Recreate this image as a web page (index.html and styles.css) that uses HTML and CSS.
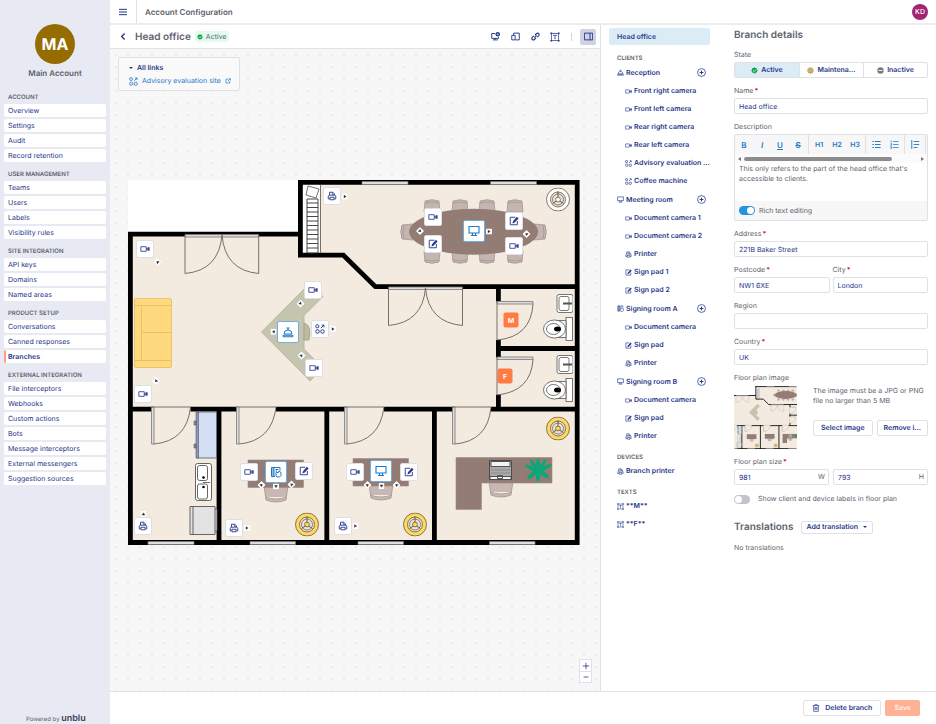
FILE: index.html
```html
<!DOCTYPE html>
<html lang="en">
<head>
<meta charset="utf-8">
<title>Account Configuration</title>
<link rel="stylesheet" href="styles.css">
</head>
<body>
<svg class="sprite" aria-hidden="true">
  <symbol id="i-cam" viewBox="0 0 24 24"><path d="M2 6.500h13v11H2zM16 11l6-3v8l-6-3z" fill="none" stroke="currentColor" stroke-width="2"/><path d="M18 10h4v4h-4z" fill="currentColor"/></symbol>
  <symbol id="i-print" viewBox="0 0 24 24"><path d="M6 10V3h8l4 4v3M6 19H3v-5c0-3 1-4 4-4h10c3 0 4 1 4 4v5h-3M7 15h10v6H7z" fill="none" stroke="currentColor" stroke-width="2.2"/><path d="M13 3v5h5" fill="none" stroke="currentColor" stroke-width="1.6"/></symbol>
  <symbol id="i-pad" viewBox="0 0 24 24"><path d="M15 3H3v18h17V12" fill="none" stroke="currentColor" stroke-width="2.2"/><path d="M19 2l4 4-10 10-5 2 2-6z" fill="currentColor"/></symbol>
  <symbol id="i-mon" viewBox="0 0 24 24"><path d="M2 3h20v13H2zM9 16v4M15 16v4M6 21h12" fill="none" stroke="currentColor" stroke-width="2.2"/></symbol>
  <symbol id="i-bell" viewBox="0 0 24 24"><path d="M4 16a8 8 0 0 1 16 0zM2 18.500h20v3H2zM12 8V4M9 4h6" fill="none" stroke="currentColor" stroke-width="2"/></symbol>
  <symbol id="i-sign" viewBox="0 0 24 24"><path d="M10 21H3V3h17v6M8 3v18M11 7h6M11 10h3" fill="none" stroke="currentColor" stroke-width="2"/><path d="M3 3h5v18H3z" fill="currentColor" opacity=".5"/><path d="M12 20v-7l2-1 2 2 2-4 4 3v6l-3 3h-5z" fill="none" stroke="currentColor" stroke-width="2"/></symbol>
  <symbol id="i-app" viewBox="0 0 24 24"><g fill="none" stroke="currentColor" stroke-width="2.200"><rect x="2" y="2" width="7" height="7" rx="2"/><rect x="2" y="14" width="8" height="8" rx="3"/><rect x="14" y="14" width="8" height="8" rx="3"/><path d="M14 10l7-7M16 2.500h5.500V8"/></g></symbol>
  <symbol id="i-text" viewBox="0 0 24 24"><path d="M3.500 3.500h17v17h-17zM8 9.500V8h8v1.500M12 8v8M10.500 16h3" fill="none" stroke="currentColor" stroke-width="1.800"/><path d="M1 1h4v4H1zM19 1h4v4h-4zM1 19h4v4H1zM19 19h4v4h-4z" fill="currentColor"/></symbol>
  <symbol id="i-plus" viewBox="0 0 24 24"><circle cx="12" cy="12" r="10.500" fill="none" stroke="currentColor" stroke-width="2"/><path d="M12 7v10M7 12h10" stroke="currentColor" stroke-width="2.600"/></symbol>
  <symbol id="i-check" viewBox="0 0 24 24"><path d="M12 1l3 2 4 0 1 4 3 4-2 4-1 4-4 1-4 3-4-3-4-1-1-4-2-4 3-4 1-4 4 0z" fill="#15a34a"/><path d="M7 12l4 4 7-8" fill="none" stroke="#fff" stroke-width="2.600"/></symbol>
  <symbol id="i-ext" viewBox="0 0 24 24"><path d="M12 5H4v15h15v-8M12 12l9-9M14 3h7v7" fill="none" stroke="currentColor" stroke-width="2.600"/></symbol>
  <symbol id="fan" viewBox="-12 -12 24 24"><circle r="11.500" fill="var(--fan, #fff)" stroke="#62594e" stroke-width=".8"/><circle r="7.500" fill="#eee2d2" stroke="#62594e" stroke-width=".8"/><circle r="5.500" fill="none" stroke="#62594e" stroke-width=".7"/><path d="M0-8v6M-5.500 4l4-2.500M5.500 4l-4-2.500" stroke="#62594e" stroke-width="1"/><circle r="2.400" fill="var(--fan, #fff)" stroke="#62594e" stroke-width=".8"/></symbol>
  <symbol id="seat" viewBox="0 0 18 14"><path d="M2 2Q9-.5 16 2L17 13H1zM2 4Q9 2 16 4" fill="#c5b5b0" stroke="#a59590" stroke-width=".8"/></symbol>
  <symbol id="desk-seat" viewBox="0 0 26 18"><path d="M1 1h24l-2 14q-10 4-20 0zM2 12q11 4 22 0" fill="#c7b8b4" stroke="#a39490" stroke-width=".8"/></symbol>
  <symbol id="wc" viewBox="0 0 30 50"><g fill="#fff" stroke="#555" stroke-width=".8"><rect x="14" y="1" width="16" height="18" rx="2"/><rect x="16" y="3" width="10" height="14" rx="2"/><path d="M20 10h9" stroke-width="2"/><rect x="23" y="24" width="6.500" height="23"/><path d="M14 27h9v17h-9z"/><ellipse cx="11.500" cy="35.500" rx="11" ry="9"/><ellipse cx="10.500" cy="35.500" rx="7" ry="5.500"/></g><ellipse cx="14.500" cy="35.500" rx="3.500" ry="2.500"/></symbol>
  <symbol id="arrow" viewBox="-3 -3 6 6"><rect x="-3" y="-3" width="6" height="6" rx="1" fill="#fff"/><path d="M-1.200-1.800L1.500 0l-2.700 1.800z" fill="#2f3447"/></symbol>

  <symbol id="plan-art" viewBox="127 179 453 366">
    <path d="M128 180h452v365H128z" fill="#fff"/>
    <path d="M130 234h170v-52h277v361H130z" fill="#f3eae0"/>
    <path d="M302 184h18v69h-18z" fill="#fff"/>
    <g fill="none" stroke="#000" stroke-width="4.800">
      <path d="M130.400 545V234.200h170M300.400 180v75.200h43l32 31.500h202M298 182.400h281M577.200 180v365M128 542.500h451"/>
      <path d="M128 409.200h23.400M190.500 409.200H239M276 409.200h68.500M384 409.200h68.500M491 409.200h86M219 407v137M326.800 407v137M434.400 407v137M498.400 287v14.500M498.400 340v17M498.400 394.700V409M496 348.500h80"/>
    </g>
    <g fill="#ddd" stroke="#777" stroke-width=".8">
      <path d="M362 181.500h46v3h-46zM490.500 181.500h46v3h-46zM148 541.500h46v3h-46zM250 541.500h45.500v3H250zM358 541.500h45.500v3H358zM489.500 541.500H535v3h-45.500zM185 234.500h73.500v2.500H185zM388.500 287h74v2.500h-74z"/>
      <path d="M151.500 407h2.500v37h-2.500zM236.500 407h2.500v37h-2.500zM344.500 407h2.500v37h-2.500zM452.500 407h2.500v37h-2.500zM497 301.500h36v2.500h-36zM497 357h36v2.500h-36z"/>
    </g>
    <g fill="none" stroke="#6b6259" stroke-width=".9">
      <path d="M185 235v38.500q34-3 37-38.500q3 35.500 36.700 38.500V235M388.500 288v37.500q34-3 37-37.500q3 34.500 37 37.500V288"/>
      <path d="M154 444q33-3 36.500-37M239 444q33-3 37-37M347 444q33-3 37-37M455 444q33-3 36-37M533 304q-2 33-36 36v-38M533 359.500q-2 32-36 35.500v-38M151 407h40M239 407h37M344 407h40M452 407h39"/>
      <path d="M320.500 185v68M308 186l11 3-3 9-10-3z"/>
      <path d="M307 199h11v54h-11zM307 203h11M307 207.500h11M307 212h11M307 216.500h11M307 221h11M307 225.500h11M307 230h11M307 234.500h11M307 239h11M307 243.500h11M307 248h11" stroke="#333"/>
    </g>
    <g fill="#fed980" stroke="#e8bd5c" stroke-width=".8">
      <rect x="134.500" y="304" width="37" height="57"/><path d="M141.500 305v55M141.500 332.500h30"/><rect x="134.500" y="298.500" width="37" height="7" rx="1.500"/><rect x="134.500" y="360.500" width="37" height="7" rx="1.500"/>
    </g>
    <path d="M261.500 332L310 283l13 13.500-19 19V349l19 19-13 13z" fill="#c5c5af" stroke="#b3b398" stroke-width=".8"/>
    <path d="M304 323q8 2 5 17h-5z" fill="#bcbc9f" stroke="#9e9e80" stroke-width=".8"/>
    <use href="#seat" x="423" y="199" width="18" height="14"/><use href="#seat" x="451" y="199" width="18" height="14"/><use href="#seat" x="478" y="199" width="18" height="14"/><use href="#seat" x="506" y="199" width="18" height="14"/>
    <g transform="matrix(1 0 0 -1 0 463)"><use href="#seat" x="423" y="199" width="18" height="14"/><use href="#seat" x="451" y="199" width="18" height="14"/><use href="#seat" x="478" y="199" width="18" height="14"/><use href="#seat" x="506" y="199" width="18" height="14"/></g>
    <use href="#seat" transform="translate(400 241) rotate(-90)" width="18" height="14"/>
    <use href="#seat" transform="translate(547 223) rotate(90)" width="18" height="14"/>
    <ellipse cx="473.600" cy="231.700" rx="64.500" ry="23" fill="#937c73"/>
    <use href="#fan" x="546" y="187.500" width="24" height="24"/>
    <g class="gold"><use href="#fan" x="546" y="416.500" width="24" height="24"/><use href="#fan" x="295" y="512.500" width="24" height="24"/><use href="#fan" x="403" y="512.500" width="24" height="24"/></g>
    <use href="#desk-seat" x="263" y="485" width="26" height="18"/><use href="#desk-seat" x="368" y="483" width="26" height="18"/><use href="#desk-seat" x="488" y="480" width="26" height="18"/>
    <path d="M248 460h55.500v27.500H248zM353 458.500h55.500V486H353zM456 457.500h96V483h-70.500v26.500H456z" fill="#937c73" stroke="#a08c84" stroke-width=".6"/>
    <g stroke="#444" stroke-width=".9"><path d="M489.500 460.500h22v19h-22z" fill="#aaa"/><path d="M491 461.500h19v5h-19zM490 476.500h21v3h-21zM497.500 475.500h5v3h-5z" fill="#f4f4f4"/><path d="M491 470h19M491 473h19" stroke="#888"/></g>
    <g fill="#0da678"><ellipse cx="538" cy="464.500" rx="2" ry="6"/><ellipse cx="538" cy="476" rx="2.200" ry="6"/><ellipse cx="532" cy="468.500" rx="2" ry="7.500" transform="rotate(-62 532 468.500)"/><ellipse cx="545" cy="468" rx="2" ry="7.500" transform="rotate(62 545 468)"/><ellipse cx="532.500" cy="474.500" rx="2.200" ry="6.500" transform="rotate(50 532.500 474.500)"/><ellipse cx="543.500" cy="474" rx="2.200" ry="6.500" transform="rotate(-55 543.500 474)"/><ellipse cx="534" cy="465" rx="1.800" ry="6.500" transform="rotate(-33 534 465)"/><ellipse cx="542.500" cy="465" rx="1.800" ry="6.500" transform="rotate(33 542.500 465)"/></g>
    <path d="M197 412h19.500v46H197z" fill="#d2dff3" stroke="#667" stroke-width=".9"/><path d="M196 412h2.500v46H196zM194 421h2v4h-2zM194 444h2v4h-2z" fill="#8a97b0" stroke="#556" stroke-width=".6"/>
    <g fill="#fff" stroke="#555" stroke-width=".9"><rect x="195.500" y="463.500" width="16" height="37" rx="2"/><rect x="197.500" y="465.500" width="10" height="15" rx="2"/><rect x="197.500" y="484" width="10" height="15" rx="2"/><path d="M203 482.500h7"/></g><circle cx="203.500" cy="477.500" r="1.300"/><circle cx="203.500" cy="487" r="1.300"/>
    <path d="M190 506.500h25v28h-25zM193 506.500v28M215 509h2v22h-2" fill="#e3e3e3" stroke="#555" stroke-width=".9"/>
    <use href="#wc" x="543" y="293.500" width="30" height="50"/><use href="#wc" x="543" y="354.500" width="30" height="50"/>
  </symbol>
</svg>

<div class="app">
  <nav class="sidebar" aria-label="Configuration">
    <div class="account"><div class="avatar">MA</div><div class="account-name">Main Account</div></div>
    <section><h2>Account</h2><a href="#">Overview</a><a href="#">Settings</a><a href="#">Audit</a><a href="#">Record retention</a></section>
    <section><h2>User management</h2><a href="#">Teams</a><a href="#">Users</a><a href="#">Labels</a><a href="#">Visibility rules</a></section>
    <section><h2>Site integration</h2><a href="#">API keys</a><a href="#">Domains</a><a href="#">Named areas</a></section>
    <section><h2>Product setup</h2><a href="#">Conversations</a><a href="#">Canned responses</a><a href="#" class="current">Branches</a></section>
    <section><h2>External integration</h2><a href="#">File interceptors</a><a href="#">Webhooks</a><a href="#">Custom actions</a><a href="#">Bots</a><a href="#">Message interceptors</a><a href="#">External messengers</a><a href="#">Suggestion sources</a></section>
    <div class="powered">Powered by <b>unblu</b></div>
  </nav>

  <div class="main">
    <header class="topbar">
      <button class="menu" aria-label="Menu"><svg viewBox="0 0 24 24"><path d="M0 4h24M0 12h24M0 20h24" stroke="currentColor" stroke-width="3"/></svg></button>
      <h1>Account Configuration</h1>
      <div class="user">KD</div>
    </header>

    <div class="work">
      <main class="editor">
        <div class="toolbar">
          <button class="tool" aria-label="Back"><svg viewBox="0 0 24 24"><path d="M15 4l-8 8 8 8" fill="none" stroke="currentColor" stroke-width="3.500"/></svg></button>
          <h2>Head office</h2>
          <span class="badge"><svg><use href="#i-check"/></svg>Active</span>
          <div class="tools">
            <button class="tool" aria-label="Add client"><svg viewBox="0 0 24 24"><path d="M11 4H2v13h18v-4M11 17v4M5 21h13" fill="none" stroke="currentColor" stroke-width="2.500"/><circle cx="18" cy="6" r="6" fill="currentColor"/><path d="M18 3v6M15 6h6" stroke="#fff" stroke-width="1.300"/></svg></button>
            <button class="tool" aria-label="Add device"><svg viewBox="0 0 24 24"><path d="M7 8V3h15v18H12M2 9h9v12H2z" fill="none" stroke="currentColor" stroke-width="2.500"/></svg></button>
            <button class="tool" aria-label="Add link"><svg viewBox="0 0 24 24"><path d="M9 15l6-6M11 8l4-4a3.800 3.800 0 0 1 5.500 5.500l-4 4M13 16l-4 4a3.800 3.800 0 0 1-5.500-5.500l4-4" fill="none" stroke="currentColor" stroke-width="3"/></svg></button>
            <button class="tool" aria-label="Add text"><svg class="wide"><use href="#i-text"/></svg></button>
            <span class="sep"></span>
            <button class="tool on" aria-label="Details panel"><svg viewBox="0 0 24 24"><path d="M1 3h22v18H1zM16 3v18" fill="none" stroke="currentColor" stroke-width="2.500"/></svg></button>
          </div>
        </div>
        <div class="canvas">
          <details class="links" open>
            <summary>All links</summary>
            <a href="#"><svg><use href="#i-app"/></svg>Advisory evaluation site<svg class="ext"><use href="#i-ext"/></svg></a>
          </details>
          <div class="plan">
            <svg class="plan-svg" viewBox="127 179 453 366" role="img" aria-label="Floor plan">
              <use href="#plan-art" x="127" y="179" width="453" height="366"/>
              <g>
                <use href="#arrow" x="-3" y="-3" width="6" height="6" transform="translate(345 196.500)"/>
                <use href="#arrow" x="-3" y="-3" width="6" height="6" transform="translate(157.500 262) rotate(215)"/>
                <use href="#arrow" x="-3" y="-3" width="6" height="6" transform="translate(300.500 303.500) rotate(45)"/>
                <use href="#arrow" x="-3" y="-3" width="6" height="6" transform="translate(273.500 331.700) rotate(180)"/>
                <use href="#arrow" x="-3" y="-3" width="6" height="6" transform="translate(301.500 355.500) rotate(-45)"/>
                <use href="#arrow" x="-3" y="-3" width="6" height="6" transform="translate(333 329)"/>
                <use href="#arrow" x="-3" y="-3" width="6" height="6" transform="translate(156 381) rotate(135)"/>
                <use href="#arrow" x="-3" y="-3" width="6" height="6" transform="translate(420 231) rotate(45)"/>
                <use href="#arrow" x="-3" y="-3" width="6" height="6" transform="translate(489 231.500)"/>
                <use href="#arrow" x="-3" y="-3" width="6" height="6" transform="translate(526.500 234) rotate(225)"/>
                <use href="#arrow" x="-3" y="-3" width="6" height="6" transform="translate(143.500 514) rotate(-90)"/>
                <use href="#arrow" x="-3" y="-3" width="6" height="6" transform="translate(247 528)"/>
                <use href="#arrow" x="-3" y="-3" width="6" height="6" transform="translate(355.500 526)"/>
                <use href="#arrow" x="-3" y="-3" width="6" height="6" transform="translate(261.500 485) rotate(-45)"/>
                <use href="#arrow" x="-3" y="-3" width="6" height="6" transform="translate(276 486.500) rotate(90)"/>
                <use href="#arrow" x="-3" y="-3" width="6" height="6" transform="translate(291.500 484.500) rotate(225)"/>
                <use href="#arrow" x="-3" y="-3" width="6" height="6" transform="translate(367.500 485) rotate(-45)"/>
                <use href="#arrow" x="-3" y="-3" width="6" height="6" transform="translate(381.500 486) rotate(90)"/>
                <use href="#arrow" x="-3" y="-3" width="6" height="6" transform="translate(396.500 485) rotate(225)"/>
              </g>
            </svg>
            <button class="pin" style="--x:18;--y:70" aria-label="Rear left camera"><svg><use href="#i-cam"/></svg></button>
            <button class="pin" style="--x:205;--y:17" aria-label="Printer"><svg><use href="#i-print"/></svg></button>
            <button class="pin" style="--x:186;--y:111" aria-label="Front right camera"><svg><use href="#i-cam"/></svg></button>
            <button class="pin" style="--x:193;--y:150" aria-label="Advisory evaluation"><svg><use href="#i-app"/></svg></button>
            <button class="pin" style="--x:187;--y:189" aria-label="Front left camera"><svg><use href="#i-cam"/></svg></button>
            <button class="pin big" style="--x:161;--y:153" aria-label="Reception"><svg><use href="#i-bell"/></svg></button>
            <button class="pin" style="--x:16;--y:215" aria-label="Rear right camera"><svg><use href="#i-cam"/></svg></button>
            <button class="pin" style="--x:306;--y:38" aria-label="Document camera 1"><svg><use href="#i-cam"/></svg></button>
            <button class="pin" style="--x:306;--y:65" aria-label="Sign pad 1"><svg><use href="#i-pad"/></svg></button>
            <button class="pin big" style="--x:347;--y:52" aria-label="Meeting room"><svg><use href="#i-mon"/></svg></button>
            <button class="pin" style="--x:387;--y:42" aria-label="Sign pad 2"><svg><use href="#i-pad"/></svg></button>
            <button class="pin" style="--x:387;--y:67" aria-label="Document camera 2"><svg><use href="#i-cam"/></svg></button>
            <button class="pin" style="--x:16;--y:347" aria-label="Branch printer"><svg><use href="#i-print"/></svg></button>
            <button class="pin" style="--x:107;--y:349" aria-label="Printer"><svg><use href="#i-print"/></svg></button>
            <button class="pin" style="--x:216;--y:347" aria-label="Printer"><svg><use href="#i-print"/></svg></button>
            <button class="pin" style="--x:122;--y:293" aria-label="Document camera"><svg><use href="#i-cam"/></svg></button>
            <button class="pin big" style="--x:149;--y:293" aria-label="Signing room A"><svg><use href="#i-sign"/></svg></button>
            <button class="pin" style="--x:177;--y:292" aria-label="Sign pad"><svg><use href="#i-pad"/></svg></button>
            <button class="pin" style="--x:228;--y:293" aria-label="Document camera"><svg><use href="#i-cam"/></svg></button>
            <button class="pin big" style="--x:254;--y:292" aria-label="Signing room B"><svg><use href="#i-mon"/></svg></button>
            <button class="pin" style="--x:282;--y:293" aria-label="Sign pad"><svg><use href="#i-pad"/></svg></button>
            <button class="pin label" style="--x:384;--y:141">M</button>
            <button class="pin label" style="--x:378;--y:197">F</button>
          </div>
          <div class="zoom"><button aria-label="Zoom in"><svg viewBox="0 0 10 10"><path d="M5 1v8M1 5h8" stroke="currentColor"/></svg></button><button aria-label="Zoom out"><svg viewBox="0 0 10 10"><path d="M2 5h6" stroke="currentColor"/></svg></button></div>
        </div>
      </main>

      <nav class="tree" aria-label="Branch items">
        <button class="root">Head office</button>
        <h3>Clients</h3>
        <ul>
          <li class="parent"><button><svg><use href="#i-bell"/></svg><span>Reception</span></button><button class="add" aria-label="Add"><svg><use href="#i-plus"/></svg></button></li>
          <li><button><svg><use href="#i-cam"/></svg><span>Front right camera</span></button></li>
          <li><button><svg><use href="#i-cam"/></svg><span>Front left camera</span></button></li>
          <li><button><svg><use href="#i-cam"/></svg><span>Rear right camera</span></button></li>
          <li><button><svg><use href="#i-cam"/></svg><span>Rear left camera</span></button></li>
          <li><button><svg><use href="#i-app"/></svg><span>Advisory evaluation ...</span></button></li>
          <li><button><svg><use href="#i-app"/></svg><span>Coffee machine</span></button></li>
          <li class="parent"><button><svg><use href="#i-mon"/></svg><span>Meeting room</span></button><button class="add" aria-label="Add"><svg><use href="#i-plus"/></svg></button></li>
          <li><button><svg><use href="#i-cam"/></svg><span>Document camera 1</span></button></li>
          <li><button><svg><use href="#i-cam"/></svg><span>Document camera 2</span></button></li>
          <li><button><svg><use href="#i-print"/></svg><span>Printer</span></button></li>
          <li><button><svg><use href="#i-pad"/></svg><span>Sign pad 1</span></button></li>
          <li><button><svg><use href="#i-pad"/></svg><span>Sign pad 2</span></button></li>
          <li class="parent"><button><svg><use href="#i-sign"/></svg><span>Signing room A</span></button><button class="add" aria-label="Add"><svg><use href="#i-plus"/></svg></button></li>
          <li><button><svg><use href="#i-cam"/></svg><span>Document camera</span></button></li>
          <li><button><svg><use href="#i-pad"/></svg><span>Sign pad</span></button></li>
          <li><button><svg><use href="#i-print"/></svg><span>Printer</span></button></li>
          <li class="parent"><button><svg><use href="#i-mon"/></svg><span>Signing room B</span></button><button class="add" aria-label="Add"><svg><use href="#i-plus"/></svg></button></li>
          <li><button><svg><use href="#i-cam"/></svg><span>Document camera</span></button></li>
          <li><button><svg><use href="#i-pad"/></svg><span>Sign pad</span></button></li>
          <li><button><svg><use href="#i-print"/></svg><span>Printer</span></button></li>
        </ul>
        <h3>Devices</h3>
        <ul class="flat"><li><button><svg><use href="#i-print"/></svg><span>Branch printer</span></button></li></ul>
        <h3>Texts</h3>
        <ul class="flat"><li><button><svg><use href="#i-text"/></svg><span>**M**</span></button></li><li><button><svg><use href="#i-text"/></svg><span>**F**</span></button></li></ul>
      </nav>

      <form class="form">
        <h2>Branch details</h2>
        <div class="field"><span class="lbl">State</span>
          <div class="segments">
            <button type="button" class="on"><svg><use href="#i-check"/></svg>Active</button>
            <button type="button"><svg viewBox="0 0 24 24"><circle cx="12" cy="12" r="9" fill="#d9c48b" stroke="#a88c3c" stroke-width="4" stroke-dasharray="4 2"/><circle cx="12" cy="12" r="4" fill="none" stroke="#a88c3c" stroke-width="2"/></svg>Maintena...</button>
            <button type="button"><svg viewBox="0 0 24 24"><circle cx="12" cy="12" r="11" fill="#747a86"/><path d="M5 12h14" stroke="#fff" stroke-width="3"/></svg>Inactive</button>
          </div>
        </div>
        <div class="field"><label class="req" for="name">Name</label><input id="name" value="Head office"></div>
        <div class="field"><label for="desc">Description</label>
          <div class="rich">
            <div class="rich-tools">
              <button type="button"><b>B</b></button><button type="button"><i>I</i></button><button type="button"><u>U</u></button><button type="button"><s>S</s></button><span class="bar"></span>
              <button type="button">H1</button><button type="button">H2</button><button type="button">H3</button><span class="bar"></span>
              <button type="button" aria-label="Bullets"><svg viewBox="0 0 24 24"><path d="M1 4h4M1 12h4M1 20h4M8 4h15M8 12h15M8 20h15" stroke="currentColor" stroke-width="2.600"/></svg></button><button type="button" aria-label="Numbering"><svg viewBox="0 0 24 24"><path d="M3 1v5M1 10h4l-3 4h3M1 18h4v4H1M8 4h15M8 12h15M8 20h15" fill="none" stroke="currentColor" stroke-width="2"/></svg></button><span class="bar"></span>
              <button type="button" aria-label="Indent"><svg viewBox="0 0 24 24"><path d="M2 0v24M7 4h15M7 12h15M7 20h10" stroke="currentColor" stroke-width="2.400"/></svg></button><span class="bar"></span>
            </div>
            <div class="scroller"><i></i><span></span><i></i></div>
            <textarea id="desc">This only refers to the part of the head office that's accessible to clients.</textarea>
            <div class="rich-foot"><input type="checkbox" class="switch" id="rte" checked><label for="rte">Rich text editing</label></div>
          </div>
        </div>
        <div class="field"><label class="req" for="addr">Address</label><input id="addr" value="221B Baker Street"></div>
        <div class="pair">
          <div class="field"><label class="req" for="post">Postcode</label><input id="post" value="NW1 6XE"></div>
          <div class="field"><label class="req" for="city">City</label><input id="city" value="London"></div>
        </div>
        <div class="field"><label for="region">Region</label><input id="region" value=""></div>
        <div class="field"><label class="req" for="country">Country</label><input id="country" value="UK"></div>
        <div class="field"><span class="lbl">Floor plan image</span>
          <div class="image-row">
            <svg class="thumb" viewBox="0 0 63 63"><use href="#plan-art" x="-8" y="0" width="78" height="63"/></svg>
            <div class="image-side"><p>The image must be a JPG or PNG file no larger than 5 MB</p>
              <div class="image-buttons"><button type="button" class="btn">Select image</button><button type="button" class="btn">Remove i...</button></div></div>
          </div>
        </div>
        <div class="field"><label class="req" for="w">Floor plan size</label>
          <div class="pair size"><div class="unit"><input id="w" value="981"><span>W</span></div><div class="unit"><input aria-label="Height" value="793"><span>H</span></div></div>
        </div>
        <div class="toggle-row"><input type="checkbox" class="switch" id="labels"><label for="labels">Show client and device labels in floor plan</label></div>
        <div class="translations"><h2>Translations</h2><button type="button" class="btn small">Add translation<span class="caret"></span></button></div>
        <p class="none">No translations</p>
      </form>
    </div>

    <footer class="actions">
      <button class="btn"><svg viewBox="0 0 24 24"><path d="M2 5h20M8 5V2h8v3M5 5v17h14V5M9 9v9M12 9v9M15 9v9" fill="none" stroke="currentColor" stroke-width="2"/></svg>Delete branch</button>
      <button class="btn save" disabled>Save</button>
    </footer>
  </div>
</div>
</body>
</html>
```
FILE: styles.css
```css
:root {
  --navy: #27378a;
  --gray: #5d636d;
  --line: #e0e1e6;
  --blue: #1d78c8;
}
* { box-sizing: border-box; margin: 0; padding: 0; }
body { font: 7px/12px Inter, "Liberation Sans", sans-serif; color: var(--gray); background: #fff; text-rendering: geometricPrecision; }
button, input, textarea { font: inherit; color: inherit; background: none; border: 0; border-radius: 0; text-rendering: inherit; }
button { display: flex; align-items: center; justify-content: center; }
a { color: inherit; text-decoration: none; }
ul { list-style: none; }
svg { display: block; flex: none; }
.sprite { position: absolute; width: 0; height: 0; }
.gold { --fan: #ffd85c; }

.app { display: grid; grid-template-columns: 110px minmax(0, 1fr); min-height: 100vh; }

.sidebar { display: flex; flex-direction: column; gap: 7px; padding: 24px 4px 0; background: #e7e9f3; color: var(--navy); }
.account { display: flex; flex-direction: column; align-items: center; gap: 3px; height: 61px; color: var(--gray); }
.avatar { width: 40px; height: 40px; border-radius: 50%; background: #946c00; color: #fff; font-size: 16px; font-weight: 700; line-height: 40px; text-align: center; }
.account-name { font-size: 8px; font-weight: 600; }
.sidebar section { display: grid; gap: 2px; }
.sidebar h2, .tree h3 { font-size: 6px; font-weight: 600; text-transform: uppercase; color: var(--gray); }
.sidebar h2 { height: 10px; padding-left: 4px; line-height: 12px; }
.sidebar a { height: 13px; padding-left: 4px; border-radius: 2px; background: #fff; line-height: 13px; }
.sidebar .current { padding-left: 2px; border-left: 2px solid #ff9f80; font-weight: 600; }
.powered { margin-top: auto; height: 10px; padding-left: 22px; font-size: 6px; line-height: 10px; color: var(--gray); white-space: nowrap; }
.powered b { font-size: 9px; font-weight: 600; line-height: 9px; color: #3b4257; }

.main { display: flex; flex-direction: column; min-width: 0; }
.topbar { display: flex; align-items: center; height: 25px; padding-right: 8px; border-bottom: 2px solid #ececee; }
.menu { width: 27px; height: 100%; border-right: 1px solid var(--line); color: var(--navy); }
.menu svg { width: 8px; height: 8px; }
.topbar h1 { padding-left: 8px; font-size: 8px; font-weight: 600; }
.user { width: 16px; margin-left: auto; border-radius: 50%; background: #a22573; color: #fff; font-size: 7px; font-weight: 500; line-height: 16px; text-align: center; }

.work { flex: 1; display: flex; align-items: stretch; min-height: 0; }
.editor { flex: 1; display: flex; flex-direction: column; min-width: 0; border-right: 1px solid var(--line); }
.toolbar { display: flex; align-items: center; height: 24px; padding: 0 4px 0 5px; border-bottom: 1px solid var(--line); color: var(--navy); }
.toolbar h2 { padding: 0 4px 0 4px; color: var(--gray); font-size: 10px; font-weight: 600; }
.badge { display: flex; align-items: center; gap: 3px; height: 11px; padding: 0 2px; border-radius: 2px; background: #e2fbee; color: var(--gray); }
.badge svg { width: 6px; height: 6px; }
.tools { display: flex; align-items: center; gap: 4px; margin-left: auto; }
.tool { width: 16px; height: 16px; border-radius: 2px; }
.tool svg { width: 9px; height: 9px; }
.tool .wide { width: 10px; height: 10px; }
.tool.on { background: #d0d2e3; }
.sep { width: 1px; height: 8px; margin: 0 4px; background: #d5d6da; }

.canvas { position: relative; flex: 1; padding: 8px; background: #f7f7f7 radial-gradient(circle, #ebebec 1px, transparent 1px) 0 0 / 12px 12px; }
.links { width: 122px; height: 34px; padding: 4px 0 0 10px; border: 1px solid var(--line); border-radius: 2px; background: #f9f9f9; color: var(--navy); }
.links summary { display: flex; align-items: center; gap: 5px; font-weight: 600; }
.links summary::before { content: ""; border: 2px solid transparent; border-top: 2px solid; border-bottom: 0; margin-right: -1px; }
.links a { display: flex; align-items: center; gap: 4px; height: 14px; color: var(--blue); }
.links svg { width: 9px; height: 9px; }
.links .ext { width: 6px; height: 6px; }

.plan { position: relative; width: 453px; margin: 88px 0 0 9px; }
.plan-svg { width: 100%; height: auto; }
.pin { position: absolute; left: calc(var(--x) * 1px); top: calc(var(--y) * 1px); width: 18px; height: 18px; transform: translate(-50%, -50%); border: 1px solid #dcdee8; border-radius: 2px; background: #fff; color: var(--navy); }
.pin svg { width: 10px; height: 10px; }
.pin.big { width: 22px; height: 22px; border-color: #70aee0; color: var(--blue); }
.pin.big svg { width: 12px; height: 12px; }
.pin.label { width: 15px; height: 15px; border: 0; background: #ff7b43; color: #fff; font-weight: 700; }
.zoom { position: absolute; right: 8px; bottom: 8px; display: grid; background: #fff; border: 1px solid var(--line); color: var(--navy); }
.zoom button { width: 11px; height: 11px; }
.zoom button + button { border-top: 1px solid var(--line); }
.zoom svg { width: 8px; height: 8px; }

.tree { width: 117px; padding: 3px 8px; color: var(--navy); font-weight: 600; }
.root { width: 101px; height: 17px; margin-bottom: 9px; justify-content: flex-start; padding-left: 8px; border-radius: 2px; background: #dcecf7; }
.tree h3 { height: 9px; padding-left: 8px; line-height: 9px; }
.tree ul + h3 { margin-top: 8px; }
.tree li { display: flex; align-items: center; height: 18px; padding-left: 16px; }
.tree .parent, .tree .flat li { padding-left: 8px; }
.tree .parent { height: 19px; }
.tree li button { gap: 2px; white-space: nowrap; }
.tree li svg { width: 7px; height: 7px; }
.tree li .add { margin-left: auto; padding-right: 4px; }
.tree .add svg { width: 9px; height: 9px; }

.form { display: flex; flex-direction: column; gap: 7px; width: 218px; padding: 2px 8px 0 16px; }
.form h2 { font-size: 10px; font-weight: 600; line-height: 16px; }
.form > h2 { height: 15px; }
.field { display: grid; gap: 1px; min-width: 0; }
.field > label, .lbl { height: 12px; line-height: 12px; }
.req::after { content: "*"; padding-left: 1px; color: #c8202f; font-weight: 600; }
.field input:not(.switch) { width: 100%; height: 16px; padding: 0 4px; border: 1px solid var(--line); border-radius: 2px; color: var(--navy); }
.segments { display: grid; grid-template-columns: repeat(3, minmax(0, 1fr)); height: 16px; border: 1px solid var(--line); border-radius: 2px; color: var(--navy); }
.segments button { gap: 3px; font-weight: 600; }
.segments button + button { border-left: 1px solid var(--line); }
.segments .on { background: #dcecf7; }
.segments svg { width: 7px; height: 7px; }
.rich { border: 1px solid var(--line); border-radius: 2px; background: #f7f7f7; overflow: hidden; }
.rich-tools { display: flex; align-items: center; height: 19px; color: var(--blue); }
.rich-tools button { flex: none; width: 18px; height: 100%; font-weight: 600; }
.rich-tools b, .rich-tools i, .rich-tools u, .rich-tools s { font-size: 8px; font-weight: 600; }
.rich-tools svg { width: 9px; height: 9px; }
.bar { flex: none; width: 1px; height: 100%; margin: 0 1px; background: var(--line); }
.scroller { display: flex; align-items: center; gap: 3px; height: 9px; padding: 0 3px; background: #fbfbfb; }
.scroller span { flex: none; width: 148px; height: 4px; border-radius: 2px; background: #8c8c8c; }
.scroller i { border: 2px solid transparent; border-left: 0; border-right: 3px solid #777; }
.scroller i:last-child { margin-left: auto; border-left: 3px solid #777; border-right: 0; }
.rich textarea { display: block; width: 100%; height: 38px; padding: 1px 4px; resize: none; background: #fff; line-height: 10px; }
.rich-foot, .toggle-row { display: flex; align-items: center; }
.rich-foot { height: 19px; padding-left: 4px; gap: 4px; }
.switch { appearance: none; width: 16px; height: 9px; padding: 1px; border-radius: 5px; background: #c3c3cb; }
.switch::before { content: ""; display: block; width: 7px; height: 7px; border-radius: 50%; background: #fff; }
.switch:checked { background: #2494dd; }
.switch:checked::before { margin-left: auto; }
.pair { display: grid; grid-template-columns: 1fr 1fr; gap: 3px; }
.size { gap: 4px; }
.image-row { display: flex; gap: 16px; padding-top: 1px; }
.thumb { width: 63px; height: 63px; border-radius: 2px; }
.image-side { flex: 1; display: flex; flex-direction: column; justify-content: space-between; min-width: 0; padding-bottom: 13px; line-height: 10px; }
.image-buttons { display: flex; gap: 4px; white-space: nowrap; }
.image-buttons .btn { flex: 7; padding: 0; }
.image-buttons .btn + .btn { flex: 6; }
.btn { height: 16px; padding: 0 7px; gap: 5px; border: 1px solid var(--line); border-radius: 2px; background: #fff; color: var(--navy); font-weight: 600; }
.btn svg { width: 8px; height: 8px; }
.unit { display: flex; align-items: center; position: relative; }
.unit span { position: absolute; right: 4px; }
.toggle-row { gap: 8px; height: 12px; margin-top: 1px; white-space: nowrap; }
.translations { display: flex; align-items: center; gap: 8px; margin-top: 7px; }
.small { height: 13px; padding: 0 5px 0 4px; }
.caret { border: 2px solid transparent; border-top: 2px solid; border-bottom: 0; }
.none { line-height: 12px; }

.actions { display: flex; align-items: center; justify-content: flex-end; gap: 4px; height: 33px; padding-right: 16px; border-top: 1px solid var(--line); }
.actions .btn { padding: 0 8px; }
.actions .save { border-color: #ffb193; background: #ffb193; color: #fff0ea; }
```
